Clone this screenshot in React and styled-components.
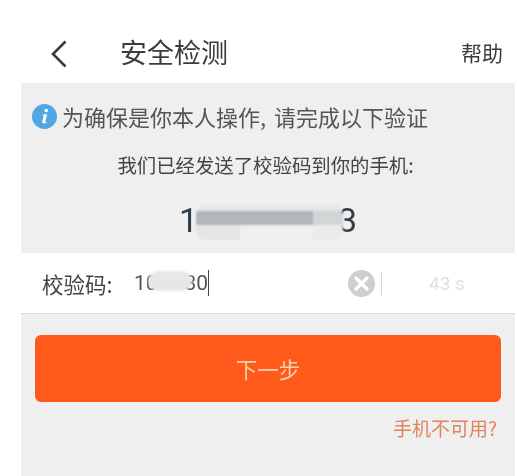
import styled, { createGlobalStyle } from "styled-components"

const GlobalStyle = createGlobalStyle`
  html, body {
    margin: 0;
    padding: 0;
    background: #fff;
  }
  body {
    font-family: "Noto Sans CJK SC", "Noto Sans", sans-serif;
  }
`

const Page = styled.div`
  width: 517px;
  height: 476px;
  box-sizing: border-box;
  padding: 0 2px 0 21px;
  overflow: hidden;
  filter: blur(0.35px);
`

const Header = styled.header`
  height: 83px;
  box-sizing: border-box;
  padding: 20px 12px 0 30px;
  display: flex;
  align-items: center;
  color: #3c3c3c;
`

const BackIcon = styled.svg`
  width: 16px;
  height: 28px;
  margin: 4px 53px 0 0;
  flex: none;
`

const Title = styled.h1`
  margin: 0;
  flex: 1;
  font-size: 27px;
  font-weight: 400;
  line-height: 36px;
`

const HelpLink = styled.a`
  font-size: 21px;
  line-height: 30px;
  color: #3c3c3c;
`

const Body = styled.main`
  height: 393px;
  background: #efeff0;
`

const Intro = styled.section`
  height: 170px;
  box-sizing: border-box;
  padding-top: 20px;
`

const Notice = styled.div`
  display: flex;
  align-items: center;
  padding-left: 11px;
  height: 26px;
  font-size: 22px;
  word-spacing: -1px;
  color: #555;
  white-space: pre;
`

const InfoIcon = styled.svg`
  width: 25px;
  height: 25px;
  margin-right: 5px;
  flex: none;
`

const SentText = styled.p`
  margin: 23px 0 0;
  padding-right: 5px;
  height: 26px;
  line-height: 26px;
  text-align: center;
  font-size: 19.4px;
  color: #444;
`

const Phone = styled.div`
  position: relative;
  width: 178px;
  margin: 22px auto 0;
  height: 40px;
  display: flex;
  justify-content: space-between;
  align-items: center;
  font-family: Roboto, sans-serif;
  font-size: 34px;
  color: #333d45;
`

const PhoneMask = styled.div`
  position: absolute;
  left: 17px;
  width: 147px;
  top: 5px;
  height: 35px;
  border-radius: 9px;
  background:
    linear-gradient(#e4e5e6, #e4e5e6) 0 100% / 44px 15px no-repeat,
    linear-gradient(#e9eaeb, #e9eaeb) 100% 100% / 30px 15px no-repeat,
    linear-gradient(#d2d5d6, #d2d5d6) 100% 6px / 30px 14px no-repeat,
    linear-gradient(#b2b6b8, #b2b6b8) 0 6px / 100% 14px no-repeat,
    linear-gradient(#e6e7e8, #e6e7e8) 0 0 / 100% 6px no-repeat;
  filter: blur(1px);
`

const CodeRow = styled.section`
  height: 60px;
  box-sizing: border-box;
  background: #fff;
  display: flex;
  align-items: center;
  padding-left: 21px;
`

const CodeLabel = styled.span`
  width: 92px;
  flex: none;
  font-size: 21.5px;
  color: #444;
  white-space: nowrap;
`

const CodeValue = styled.div`
  position: relative;
  width: 74px;
  height: 26px;
  flex: none;
  display: flex;
  justify-content: space-between;
  align-items: center;
  font-family: Roboto, sans-serif;
  font-size: 21px;
  color: #555;
  border-right: 1.5px solid #444;
`

const CodeMask = styled.div`
  position: absolute;
  left: 14px;
  width: 44px;
  top: 1px;
  height: 20px;
  border-radius: 10px;
  background: #e6e7e8;
  filter: blur(1px);
`

const ClearIcon = styled.svg`
  width: 27px;
  height: 27px;
  margin-left: 139px;
  flex: none;
`

const Divider = styled.span`
  width: 1px;
  height: 23px;
  margin-left: 6px;
  flex: none;
  background: #d4d4d4;
`

const Countdown = styled.span`
  margin-left: 47px;
  font-family: Roboto, sans-serif;
  font-size: 19px;
  color: #dfdfdf;
`

const RowRule = styled.div`
  height: 1px;
  background: #dcdcdc;
`

const Actions = styled.section`
  padding: 21px 14px 0 14px;
  display: flex;
  flex-direction: column;
`

const NextButton = styled.button`
  height: 67px;
  border: none;
  border-radius: 6px;
  background: #ff5a1b;
  color: #fbd0ac;
  font-family: inherit;
  font-size: 21.5px;
`

const PhoneHelp = styled.a`
  margin: 12px 4px 0 0;
  align-self: flex-end;
  font-size: 19px;
  line-height: 28px;
  color: #e0845f;
`

export default function App() {
  return (
    <>
      <GlobalStyle />
      <Page>
        <Header>
          <BackIcon viewBox="0 0 16 28" fill="none" stroke="#3c3c3c" strokeWidth="2.6">
            <path d="M14.5 1.5 2 14l12.5 12.5" />
          </BackIcon>
          <Title>安全检测</Title>
          <HelpLink>帮助</HelpLink>
        </Header>
        <Body>
          <Intro>
            <Notice>
              <InfoIcon viewBox="0 0 25 25">
                <circle cx="12.5" cy="12.5" r="12.5" fill="#52a7e2" />
                <circle cx="14.2" cy="6.6" r="1.8" fill="#fff" />
                <path d="M11.6 10.2h3.6l-2 7.4c-.2.7.4.8 1.8.1l-.2.9c-1.6 1.2-5 1.5-4.6-.8l1.5-6.1-1.2-.4z" fill="#fff" />
              </InfoIcon>
              为确保是你本人操作,  请完成以下验证
            </Notice>
            <SentText>我们已经发送了校验码到你的手机:</SentText>
            <Phone>
              <span>1</span>
              <PhoneMask />
              <span>3</span>
            </Phone>
          </Intro>
          <CodeRow>
            <CodeLabel>校验码:</CodeLabel>
            <CodeValue>
              <span>10</span>
              <CodeMask />
              <span>30</span>
            </CodeValue>
            <ClearIcon viewBox="0 0 27 27">
              <circle cx="13.5" cy="13.5" r="13.5" fill="#cfcfcf" />
              <path d="M8 8l11 11M19 8 8 19" stroke="#fff" strokeWidth="3.4" strokeLinecap="round" />
            </ClearIcon>
            <Divider />
            <Countdown>43 s</Countdown>
          </CodeRow>
          <RowRule />
          <Actions>
            <NextButton>下一步</NextButton>
            <PhoneHelp>手机不可用?</PhoneHelp>
          </Actions>
        </Body>
      </Page>
    </>
  )
}
